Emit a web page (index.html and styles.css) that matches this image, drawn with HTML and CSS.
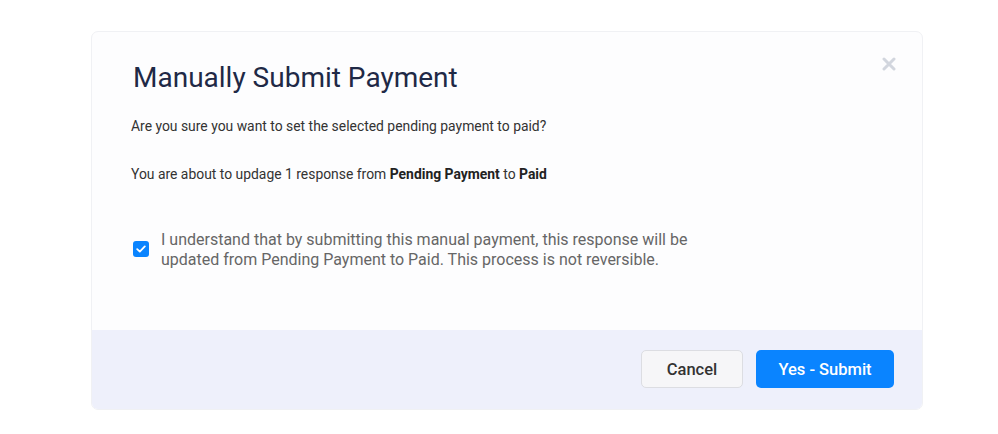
FILE: index.html
```html
<!DOCTYPE html>
<html>
  <head>
    <title>Manually Submit Payment</title>
    <meta charset="utf-8"/>
    <link rel="stylesheet" href="styles.css">
  </head>
  <body>
    <div class="modal">
      <div class="modal-body">
        <button class="close" aria-label="Close">
          <svg width="14" height="14" viewBox="0 0 14 14">
            <path d="M2 2 L12 12 M12 2 L2 12" stroke="#d2d6de" stroke-width="3" stroke-linecap="round"/>
          </svg>
        </button>
        <h1 class="title">Manually Submit Payment</h1>
        <p class="text">Are you sure you want to set the selected pending payment to paid?</p>
        <p class="text">You are about to updage 1 response from <strong>Pending Payment</strong> to <strong>Paid</strong></p>
        <label class="confirm">
          <span class="check">
            <svg width="10" height="8" viewBox="0 0 10 8">
              <path d="M1.2 4.2 L3.8 6.6 L8.8 1.4" fill="none" stroke="#fff" stroke-width="1.8" stroke-linecap="round" stroke-linejoin="round"/>
            </svg>
          </span>
          <span class="confirm-text">I understand that by submitting this manual payment, this response will be updated from Pending Payment to Paid. This process is not reversible.</span>
        </label>
      </div>
      <div class="modal-footer">
        <button class="btn btn-cancel">Cancel</button>
        <button class="btn btn-submit">Yes - Submit</button>
      </div>
    </div>
  </body>
</html>
```
FILE: styles.css
```css
body {
  background: #fff;
  font-family: Roboto, "Liberation Sans", Arial, sans-serif;
  margin: 0;
  padding: 31px 0 0 91px;
}
.modal {
  background: #fdfdfe;
  border: 1px solid #f0f1f4;
  border-radius: 7px;
  box-sizing: border-box;
  overflow: hidden;
  width: 832px;
}
.modal-body {
  height: 298px;
  padding: 28px 40px 0 39px;
  position: relative;
  box-sizing: border-box;
}
.close {
  background: none;
  border: 0;
  cursor: pointer;
  padding: 0;
  position: absolute;
  right: 26px;
  top: 25px;
}
.title {
  color: #1f2946;
  font-size: 28px;
  font-weight: 400;
  margin: 0 0 0 2px;
  line-height: 36px;
}
.text {
  color: #333;
  font-size: 13.9px;
  line-height: 18px;
  margin: 21px 0 0 0;
}
.text + .text {
  margin-top: 30px;
}
.text strong {
  color: #222;
  font-weight: 700;
}
.confirm {
  align-items: flex-start;
  display: flex;
  margin: 47px 0 0 2px;
}
.check {
  align-items: center;
  background: #0a84ff;
  border-radius: 3px;
  display: flex;
  flex: none;
  height: 16px;
  justify-content: center;
  margin: 11px 12px 0 0;
  width: 16px;
}
.confirm-text {
  color: #666;
  font-size: 16px;
  line-height: 20px;
  width: 560px;
}
.modal-footer {
  background: #eef0fb;
  display: flex;
  gap: 13px;
  justify-content: flex-end;
  height: 79px;
  padding: 20px 28px 0 0;
  box-sizing: border-box;
}
.btn {
  border-radius: 5px;
  cursor: pointer;
  font-family: inherit;
  font-size: 16.5px;
  font-weight: 500;
  height: 38px;
}
.btn-cancel {
  background: #f6f6f8;
  border: 1px solid #dcdde2;
  color: #333;
  width: 102px;
}
.btn-submit {
  background: #0a84ff;
  border: 0;
  color: #fff;
  width: 138px;
}
```
